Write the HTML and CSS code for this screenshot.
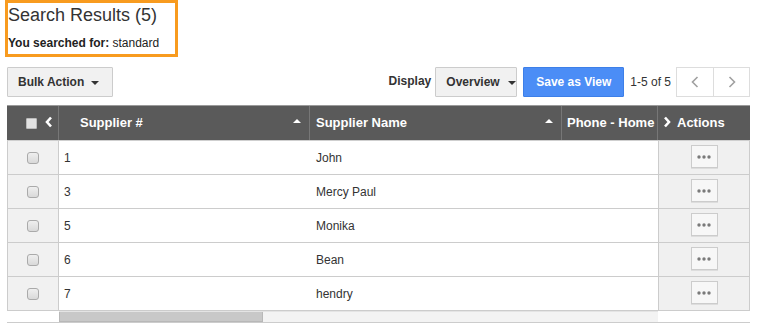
FILE: index.html
```html
<!DOCTYPE html>
<html lang="en">
<head>
<meta charset="utf-8">
<title>Search Results</title>
<link rel="stylesheet" href="styles.css">
</head>
<body>
<div class="page">
  <div class="summary">
    <h1 class="title">Search Results (5)</h1>
    <div class="searched"><b>You searched for:</b> standard</div>
  </div>

  <div class="toolbar">
    <button class="btn bulk">Bulk Action <span class="caret"></span></button>
    <div class="tools">
      <span class="label">Display</span>
      <button class="btn view">Overview <span class="caret"></span></button>
      <button class="btn primary">Save as View</button>
      <span class="count">1-5 of 5</span>
      <div class="pager">
        <button class="page-btn"><svg width="8" height="12" viewBox="0 0 8 12"><polyline points="6.5,1 1.5,6 6.5,11" fill="none" stroke="#a0a0a0" stroke-width="1.6"/></svg></button>
        <button class="page-btn"><svg width="8" height="12" viewBox="0 0 8 12"><polyline points="1.5,1 6.5,6 1.5,11" fill="none" stroke="#a0a0a0" stroke-width="1.6"/></svg></button>
      </div>
    </div>
  </div>

  <div class="grid">
    <div class="row head">
      <div class="cell c0">
        <span class="hcheck"></span>
        <svg class="hchev" width="8" height="12" viewBox="0 0 8 12"><polyline points="6,1.5 2,6 6,10.5" fill="none" stroke="#fff" stroke-width="2.6"/></svg>
      </div>
      <div class="cell c1"><span>Supplier #</span><span class="sort"></span></div>
      <div class="cell c2"><span>Supplier Name</span><span class="sort"></span></div>
      <div class="cell c3"><span>Phone - Home</span></div>
      <div class="cell c4">
        <svg class="achev" width="8" height="12" viewBox="0 0 8 12"><polyline points="2,1.5 6,6 2,10.5" fill="none" stroke="#fff" stroke-width="2.6"/></svg>
        <span>Actions</span>
      </div>
    </div>

    <div class="row body">
      <div class="cell c0"><span class="check"></span></div>
      <div class="cell c1">1</div>
      <div class="cell c2">John</div>
      <div class="cell c3"></div>
      <div class="cell c4"><button class="more"><svg width="14" height="4" viewBox="0 0 14 4"><circle cx="2" cy="2" r="1.7" fill="#7a7a7a"/><circle cx="7" cy="2" r="1.7" fill="#7a7a7a"/><circle cx="12" cy="2" r="1.7" fill="#7a7a7a"/></svg></button></div>
    </div>
    <div class="row body">
      <div class="cell c0"><span class="check"></span></div>
      <div class="cell c1">3</div>
      <div class="cell c2">Mercy Paul</div>
      <div class="cell c3"></div>
      <div class="cell c4"><button class="more"><svg width="14" height="4" viewBox="0 0 14 4"><circle cx="2" cy="2" r="1.7" fill="#7a7a7a"/><circle cx="7" cy="2" r="1.7" fill="#7a7a7a"/><circle cx="12" cy="2" r="1.7" fill="#7a7a7a"/></svg></button></div>
    </div>
    <div class="row body">
      <div class="cell c0"><span class="check"></span></div>
      <div class="cell c1">5</div>
      <div class="cell c2">Monika</div>
      <div class="cell c3"></div>
      <div class="cell c4"><button class="more"><svg width="14" height="4" viewBox="0 0 14 4"><circle cx="2" cy="2" r="1.7" fill="#7a7a7a"/><circle cx="7" cy="2" r="1.7" fill="#7a7a7a"/><circle cx="12" cy="2" r="1.7" fill="#7a7a7a"/></svg></button></div>
    </div>
    <div class="row body">
      <div class="cell c0"><span class="check"></span></div>
      <div class="cell c1">6</div>
      <div class="cell c2">Bean</div>
      <div class="cell c3"></div>
      <div class="cell c4"><button class="more"><svg width="14" height="4" viewBox="0 0 14 4"><circle cx="2" cy="2" r="1.7" fill="#7a7a7a"/><circle cx="7" cy="2" r="1.7" fill="#7a7a7a"/><circle cx="12" cy="2" r="1.7" fill="#7a7a7a"/></svg></button></div>
    </div>
    <div class="row body">
      <div class="cell c0"><span class="check"></span></div>
      <div class="cell c1">7</div>
      <div class="cell c2">hendry</div>
      <div class="cell c3"></div>
      <div class="cell c4"><button class="more"><svg width="14" height="4" viewBox="0 0 14 4"><circle cx="2" cy="2" r="1.7" fill="#7a7a7a"/><circle cx="7" cy="2" r="1.7" fill="#7a7a7a"/><circle cx="12" cy="2" r="1.7" fill="#7a7a7a"/></svg></button></div>
    </div>

    <div class="scrollrow">
      <div class="sleft"></div>
      <div class="track"><div class="thumb"></div></div>
      <div class="sright"></div>
    </div>
  </div>
</div>
</body>
</html>
```

FILE: styles.css
```css
* { box-sizing: border-box; }

html, body {
  margin: 0;
  padding: 0;
  background: #fff;
}

body {
  font-family: "Liberation Sans", Arial, Helvetica, sans-serif;
  font-size: 12px;
  color: #333;
}

.page {
  width: 764px;
  padding: 0 14px 0 7px;
}

/* summary box */
.summary {
  width: 173px;
  height: 57px;
  margin-left: -2px;
  border: 3px solid #f89b1f;
}

.title {
  margin: 1px 0 0;
  font-size: 18px;
  line-height: 22px;
  font-weight: normal;
  color: #333;
}

.searched {
  margin-top: 9px;
  line-height: 16px;
  font-size: 12px;
  color: #222;
}

.searched b { font-weight: bold; }

/* toolbar */
.toolbar {
  display: flex;
  justify-content: space-between;
  align-items: center;
  margin-top: 10px;
  height: 30px;
}

.btn {
  display: inline-flex;
  align-items: center;
  height: 30px;
  padding: 0 10px;
  border: 1px solid #ccc;
  border-radius: 1px;
  background: #f1f1f1;
  font-family: inherit;
  font-size: 12px;
  font-weight: bold;
  color: #333;
  cursor: pointer;
}

.bulk {
  width: 106px;
  padding-left: 10px;
}

.caret {
  display: inline-block;
  width: 0;
  height: 0;
  margin-left: 7px;
  margin-top: 1px;
  border-left: 4px solid transparent;
  border-right: 4px solid transparent;
  border-top: 4px solid #333;
}

.tools {
  display: flex;
  align-items: center;
}

.label {
  font-weight: bold;
  margin-right: 4px;
  margin-top: -3px;
  margin-left: 2px;
}

.view {
  width: 82px;
  padding-left: 10px;
}

.view .caret { margin-left: 8px; }

.primary {
  margin-left: 6px;
  width: 101px;
  justify-content: center;
  background: #4b8df6;
  border-color: #3d7fe8;
  color: #fff;
}

.count {
  margin-left: 6px;
  color: #333;
}

.pager {
  display: flex;
  margin-left: 5px;
  height: 30px;
  border: 1px solid #ddd;
  background: #fff;
}

.page-btn {
  width: 36px;
  height: 28px;
  display: flex;
  align-items: center;
  justify-content: center;
  border: 0;
  padding: 0;
  background: #fff;
}

.page-btn + .page-btn { border-left: 1px solid #ddd; }

/* grid */
.grid {
  margin-top: 8px;
  width: 743px;
}

.row {
  display: grid;
  grid-template-columns: 52px 251px 252px 96px 92px;
}

.cell {
  display: flex;
  align-items: center;
  min-width: 0;
  white-space: nowrap;
  overflow: hidden;
}

.head {
  height: 36px;
  background: #5a5a5a;
  border-top: 1px solid #9a9a9a;
  border-bottom: 1px solid #cfcfcf;
  color: #fff;
  font-size: 13px;
  font-weight: bold;
}

.head .cell { border-right: 1px solid #777; padding-bottom: 2px; }
.head .c4 { border-right: 0; }
.head .c0 { padding-left: 19px; }
.head .c1 { padding-left: 21px; padding-right: 8px; justify-content: space-between; }
.head .c2 { padding-left: 6px; padding-right: 8px; justify-content: space-between; }
.head .c3 { padding-left: 5px; }
.head .c4 { padding-left: 5px; }

.hcheck {
  width: 11px;
  height: 11px;
  margin-top: 3px;
  border: 1px solid #bbb;
  border-radius: 1px;
  background: #e2e2e2;
}

.hchev { margin-left: 8px; }
.achev { margin-right: 6px; }

.sort {
  width: 0;
  height: 0;
  margin-top: -2px;
  border-left: 4px solid transparent;
  border-right: 4px solid transparent;
  border-bottom: 4px solid #fff;
}

.body {
  height: 34px;
  border-bottom: 1px solid #ccc;
}

.body .c0 {
  justify-content: center;
  background: #f1f1f1;
  border-left: 1px solid #ccc;
  border-right: 1px solid #ccc;
}

.body .c1 { padding-left: 5px; }
.body .c2 { padding-left: 6px; }

.body .c4 {
  justify-content: center;
  background: #f0f0f0;
  border-left: 1px solid #ccc;
  border-right: 1px solid #ccc;
}

.check {
  width: 12px;
  height: 12px;
  margin-left: -1px;
  border: 1px solid #aaa;
  border-radius: 3px;
  background: linear-gradient(#efefef, #d9d9d9);
}

.more {
  width: 27px;
  height: 23px;
  margin-top: -2px;
  padding: 0;
  display: flex;
  align-items: center;
  justify-content: center;
  border: 1px solid #ccc;
  background: #f7f7f7;
  box-shadow: 0 1px 0 #ddd;
}

/* scrollbar */
.scrollrow {
  display: flex;
  height: 12px;
  border-bottom: 1px solid #ccc;
}

.sleft { width: 52px; }

.track {
  width: 599px;
  height: 11px;
  background: #f3f3f3;
  border-top: 1px solid #e4e4e4;
}

.thumb {
  width: 204px;
  height: 10px;
  background: #c8c8c8;
  border: 1px solid #b8b8b8;
  border-top: 0;
}

.sright { width: 92px; }
```
